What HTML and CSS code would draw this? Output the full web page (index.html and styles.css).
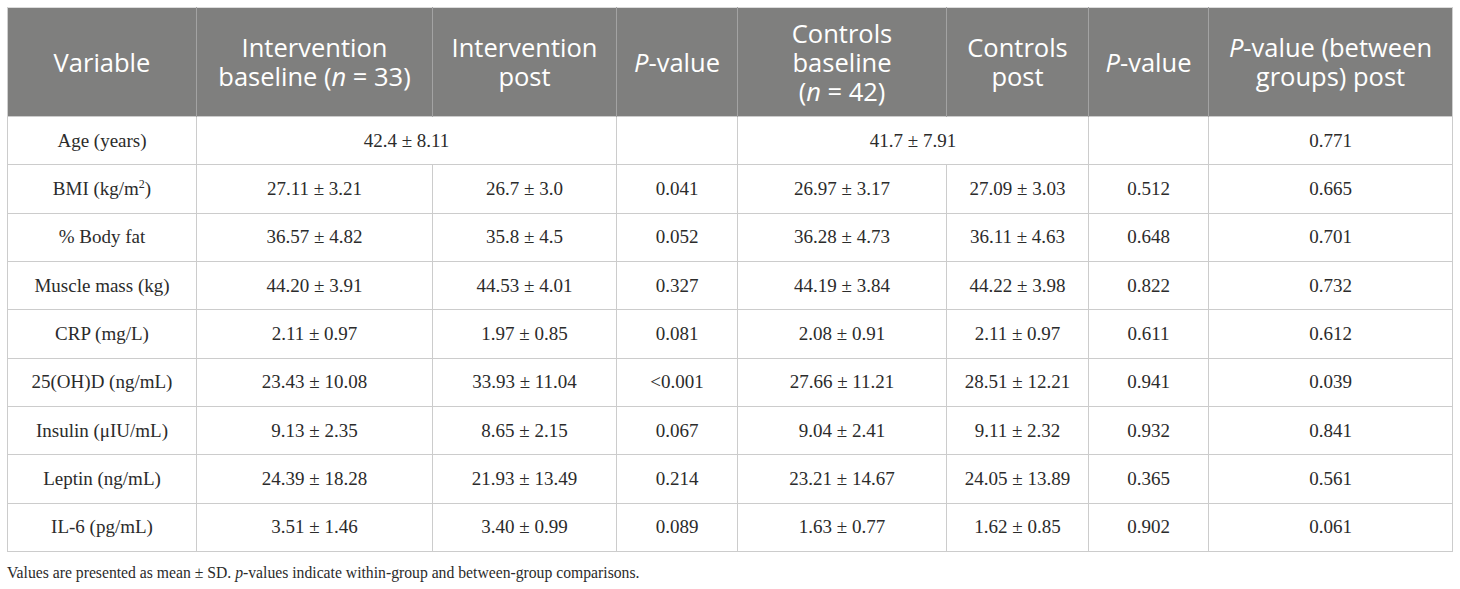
FILE: index.html
```html
<!DOCTYPE html>
<html lang="en">
<head>
<meta charset="utf-8">
<title>Table</title>
<link rel="stylesheet" href="styles.css">
</head>
<body>
<div class="wrap">
<table class="data">
  <colgroup>
    <col class="c1"><col class="c2"><col class="c3"><col class="c4"><col class="c5"><col class="c6"><col class="c7"><col class="c8">
  </colgroup>
  <thead>
    <tr>
      <th>Variable</th>
      <th>Intervention baseline (<i>n</i> = 33)</th>
      <th>Intervention post</th>
      <th><i>P</i>-value</th>
      <th class="narrow">Controls baseline (<i>n</i> = 42)</th>
      <th>Controls post</th>
      <th><i>P</i>-value</th>
      <th><i>P</i>-value (between groups) post</th>
    </tr>
  </thead>
  <tbody>
    <tr><td>Age (years)</td><td colspan="2">42.4 ± 8.11</td><td></td><td colspan="2">41.7 ± 7.91</td><td></td><td>0.771</td></tr>
    <tr><td>BMI (kg/m<sup>2</sup>)</td><td>27.11 ± 3.21</td><td>26.7 ± 3.0</td><td>0.041</td><td>26.97 ± 3.17</td><td>27.09 ± 3.03</td><td>0.512</td><td>0.665</td></tr>
    <tr><td>% Body fat</td><td>36.57 ± 4.82</td><td>35.8 ± 4.5</td><td>0.052</td><td>36.28 ± 4.73</td><td>36.11 ± 4.63</td><td>0.648</td><td>0.701</td></tr>
    <tr><td>Muscle mass (kg)</td><td>44.20 ± 3.91</td><td>44.53 ± 4.01</td><td>0.327</td><td>44.19 ± 3.84</td><td>44.22 ± 3.98</td><td>0.822</td><td>0.732</td></tr>
    <tr><td>CRP (mg/L)</td><td>2.11 ± 0.97</td><td>1.97 ± 0.85</td><td>0.081</td><td>2.08 ± 0.91</td><td>2.11 ± 0.97</td><td>0.611</td><td>0.612</td></tr>
    <tr><td>25(OH)D (ng/mL)</td><td>23.43 ± 10.08</td><td>33.93 ± 11.04</td><td>&lt;0.001</td><td>27.66 ± 11.21</td><td>28.51 ± 12.21</td><td>0.941</td><td>0.039</td></tr>
    <tr><td>Insulin (μIU/mL)</td><td>9.13 ± 2.35</td><td>8.65 ± 2.15</td><td>0.067</td><td>9.04 ± 2.41</td><td>9.11 ± 2.32</td><td>0.932</td><td>0.841</td></tr>
    <tr><td>Leptin (ng/mL)</td><td>24.39 ± 18.28</td><td>21.93 ± 13.49</td><td>0.214</td><td>23.21 ± 14.67</td><td>24.05 ± 13.89</td><td>0.365</td><td>0.561</td></tr>
    <tr><td>IL-6 (pg/mL)</td><td>3.51 ± 1.46</td><td>3.40 ± 0.99</td><td>0.089</td><td>1.63 ± 0.77</td><td>1.62 ± 0.85</td><td>0.902</td><td>0.061</td></tr>
  </tbody>
</table>
<p class="note">Values are presented as mean ± SD. <i>p</i>-values indicate within-group and between-group comparisons.</p>
</div>
</body>
</html>
```

FILE: styles.css
```css
html, body {
  margin: 0;
  padding: 0;
  background: #ffffff;
}

.wrap {
  padding: 7px 0 0 7px;
}

.data {
  border-collapse: collapse;
  table-layout: fixed;
  width: 1446px;
  border-top: 1px solid #dcdcdc;
}

.c1 { width: 189px; }
.c2 { width: 236px; }
.c3 { width: 184px; }
.c4 { width: 121px; }
.c5 { width: 209px; }
.c6 { width: 142px; }
.c7 { width: 120px; }
.c8 { width: 244px; }

.data th {
  background: #7f7f7e;
  color: #ffffff;
  font-family: "Open Sans", "Noto Sans", sans-serif;
  font-weight: 400;
  font-size: 25.5px;
  line-height: 29px;
  height: 109px;
  padding: 0 10px;
  box-sizing: border-box;
  text-align: center;
  vertical-align: middle;
  border-left: 1px solid #a3a3a3;
  border-right: 1px solid #a3a3a3;
}

.data th:first-child {
  border-left: 1px solid #cfcfcf;
}

.data th:last-child {
  border-right: 1px solid #cfcfcf;
}

.data th.narrow {
  padding: 0 44px;
}

.data td {
  font-family: "Liberation Serif", "Times New Roman", serif;
  font-size: 19px;
  color: #2b2b2b;
  text-align: center;
  vertical-align: middle;
  height: 48.33px;
  padding: 0 6px;
  box-sizing: border-box;
  border: 1px solid #cccccc;
}

.data sup {
  font-size: 12px;
  line-height: 0;
  vertical-align: 7px;
}

.note {
  margin: 12px 0 0 0;
  font-family: "Liberation Serif", "Times New Roman", serif;
  font-size: 15.7px;
  color: #2b2b2b;
}
```
